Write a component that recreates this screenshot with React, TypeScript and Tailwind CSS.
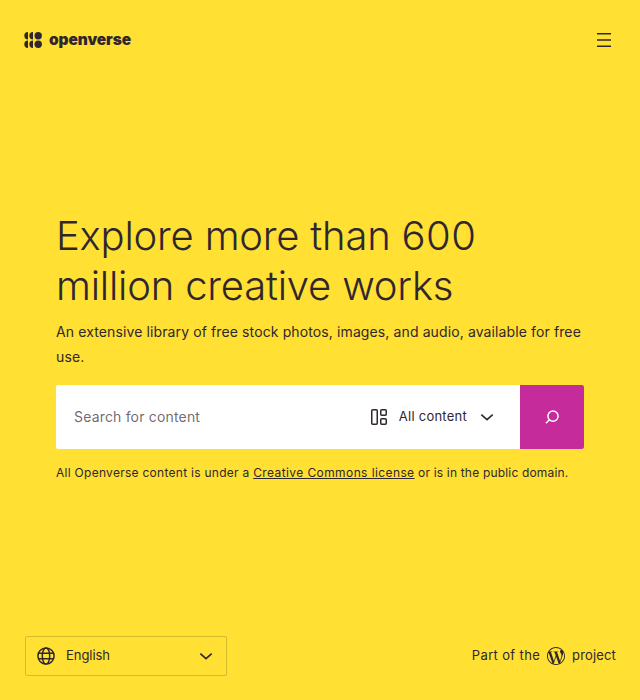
import React from 'react'
import { SiWordpress } from 'react-icons/si'

function Logo() {
  return (
    <a className="flex items-center gap-[7px]">
      <svg width="18" height="16" viewBox="0 0 18 16" fill="currentColor">
        <path d="M4 0A3.7 3.7 0 0 0 4 7.4ZM4 8.6A3.7 3.7 0 0 0 4 16Z" />
        <path d="M9 0A3.7 3.7 0 0 0 9 7.4ZM9 8.6A3.7 3.7 0 0 0 9 16Z" />
        <circle cx="14.2" cy="3.7" r="3.7" />
        <circle cx="14.2" cy="12.3" r="3.7" />
      </svg>
      <span className="-mt-px text-[15.5px] leading-4 font-black tracking-[-0.12px]">openverse</span>
    </a>
  )
}

function Chevron() {
  return (
    <svg width="14" height="8" viewBox="0 0 14 8" fill="none" stroke="currentColor" strokeWidth="1.6">
      <path d="M1.3 1.6 7 6.6 12.7 1.6" />
    </svg>
  )
}

export default function App() {
  return (
    <div className="flex h-[700px] w-[640px] flex-col bg-[#ffe033] font-['Inter',sans-serif] text-[#30272e]">
      <header className="flex h-20 items-center justify-between pr-[29px] pl-6">
        <Logo />
        <svg width="14" height="14" viewBox="0 0 14 14" stroke="currentColor" strokeWidth="1.5">
          <path d="M0 .75H14M0 7H14M0 13.25H14" />
        </svg>
      </header>
      <main className="flex flex-1 flex-col px-14 pt-[131px]">
        <h1 className="text-[40px] leading-[50px] font-light whitespace-nowrap">
          <span className="tracking-[-0.21px]">Explore more than </span>
          <span className="tracking-[0.5px]">600</span>
          <br />
          <span className="tracking-[-0.2px]">million creative works</span>
        </h1>
        <p className="mt-2 text-[14px] leading-[25px] tracking-[0.115px] whitespace-nowrap">
          An extensive library of free stock photos, images, and audio, available for free
          <br />
          use.
        </p>
        <form className="mt-4 flex h-16 overflow-hidden rounded-[2px] bg-white">
          <div className="flex flex-1 items-center pb-0.5 pl-[18px] text-[14px] tracking-[0.18px] text-[#30272e]/70">
            Search for content
          </div>
          <button type="button" className="flex items-center pr-[26px] text-[13px]">
            <svg width="16" height="16" viewBox="0 0 16 16" fill="none" stroke="currentColor" strokeWidth="1.5">
              <rect x=".75" y=".75" width="5.5" height="14.5" rx="1" />
              <rect x="9.75" y=".75" width="5.5" height="5.5" rx="1" />
              <rect x="9.75" y="9.75" width="5.5" height="5.5" rx="1" />
            </svg>
            <span className="mr-[13px] ml-3 tracking-[0.25px]">All content</span>
            <Chevron />
          </button>
          <button type="button" className="flex w-16 items-center justify-center bg-[#c52b9b] text-white">
            <svg width="14" height="14" viewBox="0 0 14 14" fill="none" stroke="currentColor" strokeWidth="1.5">
              <circle cx="8" cy="6.2" r="5.1" />
              <path d="M4.5 9.7 .9 13.2" />
            </svg>
          </button>
        </form>
        <p className="mt-4 text-[12px] leading-4 tracking-[0.275px] whitespace-nowrap">
          All Openverse content is under a{' '}
          <a className="tracking-[0.4px] underline">Creative Commons license</a>
          <span className="tracking-[0.18px]"> or is in the public domain.</span>
        </p>
      </main>
      <footer className="flex items-center justify-between pr-6 pb-6 pl-[25px] text-[13px]">
        <button type="button" className="flex h-10 w-[202px] items-center rounded-[2px] border border-[#30272e]/20 pr-[13px] pl-[11px]">
          <svg width="18" height="18" viewBox="0 0 18 18" fill="none" stroke="currentColor" strokeWidth="1.5">
            <circle cx="9" cy="9" r="8.1" />
            <ellipse cx="9" cy="9" rx="3.7" ry="8.1" />
            <path d="M1.4 6.2H16.6M1.4 11.8H16.6" />
          </svg>
          <span className="ml-[11px] flex-1 text-left tracking-[-0.05px]">English</span>
          <Chevron />
        </button>
        <a className="flex items-center">
          <span className="tracking-[0.35px]">Part of the</span>
          <SiWordpress className="mx-[7px]" size={18} />
          <span className="tracking-[0.15px]">project</span>
        </a>
      </footer>
    </div>
  )
}
